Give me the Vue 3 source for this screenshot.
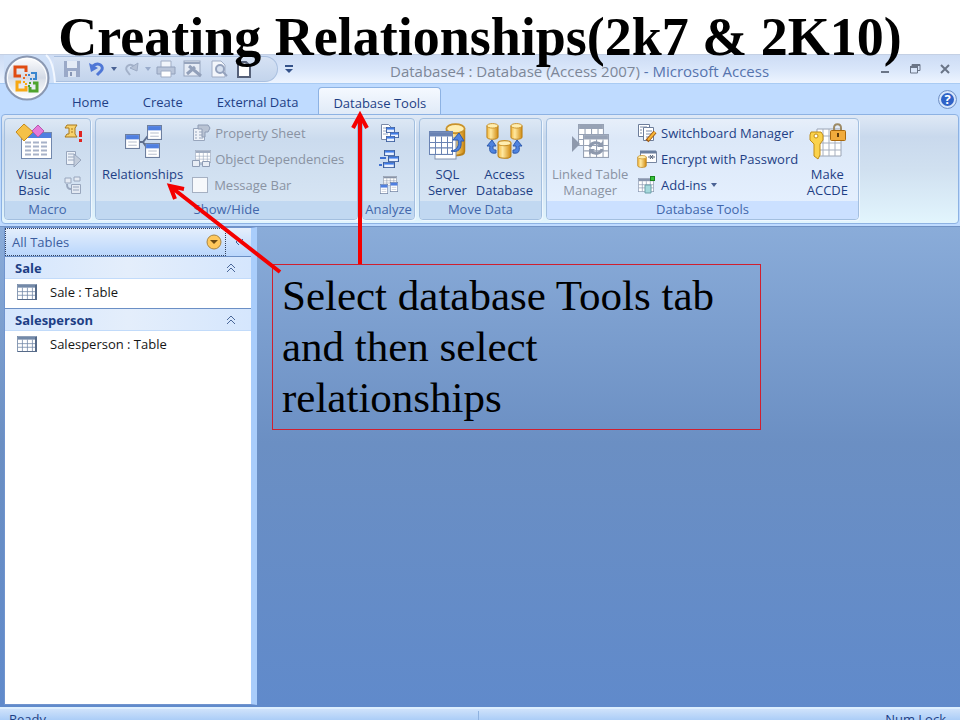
<template>
  <div class="slide">
    <h1 class="slide-title">Creating Relationships(2k7 &amp; 2K10)</h1>

    <!-- shared icon parts -->
    <svg class="defs" aria-hidden="true">
      <defs>
        <linearGradient id="gold" x1="0" x2="1" y1="0" y2="0">
          <stop offset="0" stop-color="#f3b73c" />
          <stop offset="0.35" stop-color="#ffe9a0" />
          <stop offset="1" stop-color="#d18a10" />
        </linearGradient>
        <linearGradient id="orb" x1="0" x2="0" y1="0" y2="1">
          <stop offset="0" stop-color="#ffffff" />
          <stop offset="0.5" stop-color="#d3dae6" />
          <stop offset="0.55" stop-color="#dde2ea" />
          <stop offset="1" stop-color="#ffffff" />
        </linearGradient>
        <symbol id="win" viewBox="0 0 14 14" preserveAspectRatio="none">
          <rect x="0.5" y="0.5" width="13" height="13" fill="#fff" stroke="#6d7f9f" />
          <rect x="1" y="1" width="12" height="4" fill="#4f7fe0" />
          <path d="M3 7.5h8M3 10.5h8" stroke="#b8bfce" />
        </symbol>
        <symbol id="pane" viewBox="0 0 10 7" preserveAspectRatio="none">
          <rect x="0.5" y="0.5" width="9" height="6" fill="#e9f1ff" stroke="#3c5f9f" />
          <rect x="1" y="1" width="8" height="2" fill="#3d7be8" />
        </symbol>
        <symbol id="drum" viewBox="0 0 14 18" preserveAspectRatio="none">
          <path d="M1 3v12c0 3 12 3 12 0V3z" fill="url(#gold)" stroke="#b98018" />
          <ellipse cx="7" cy="3" rx="6" ry="2.4" fill="#ffeeb0" stroke="#c9922a" />
        </symbol>
        <symbol id="sheet" viewBox="0 0 24 22" preserveAspectRatio="none">
          <rect x="0.5" y="0.5" width="23" height="21" fill="#fff" stroke="currentColor" />
          <rect x="1" y="1" width="22" height="4" fill="currentColor" />
          <path d="M1 10.5h22M1 15.5h22M6.5 5v16M12.5 5v16M18.5 5v16" stroke="currentColor" />
        </symbol>
      </defs>
    </svg>

    <div class="window">
      <header class="title-bar">
        <div class="quick-access">
          <button class="qa" aria-label="Save">
            <svg width="18" height="18"><path d="M1 1h16v16H1z" fill="#9aa9c8" /><path d="M4 1h10v7H4z" fill="#e4ebf6" /><path d="M5 11h8v6H5z" fill="#dce4f1" /><path d="M7 12h2v4H7z" fill="#8796b5" /></svg>
          </button>
          <button class="qa" aria-label="Undo">
            <svg width="18" height="18"><path d="M5 6c6-5 12 1 8 5l-4 4" fill="none" stroke="#4f77d6" stroke-width="3" /><path d="M1 3l2 9 7-4z" fill="#4f77d6" /></svg>
          </button>
          <span class="drop"></span>
          <button class="qa redo" aria-label="Redo">
            <svg width="18" height="18"><path d="M13 7c-5-5-11 0-8 4l3 4" fill="none" stroke="#a3b1c9" stroke-width="2" /><path d="M16 3l-1 8-7-3z" fill="#b5c1d6" stroke="#9cabc5" /></svg>
          </button>
          <span class="drop faded"></span>
          <button class="qa" aria-label="Print">
            <svg width="20" height="18"><path d="M5 1h10v7H5z" fill="#f1f5fb" stroke="#a0adc5" /><path d="M1 7h18v7H1z" fill="#b9c5da" stroke="#92a1bc" /><path d="M5 11h10v6H5z" fill="#fff" stroke="#a0adc5" /></svg>
          </button>
          <button class="qa" aria-label="Design view">
            <svg width="20" height="18"><rect x="1" y="1" width="16" height="15" fill="#e6ecf6" stroke="#97a5be" /><path d="M1 3h16" stroke="#97a5be" stroke-width="2" /><path d="M6 6l12 10M4 14l8-7" stroke="#92a0ba" stroke-width="3" /></svg>
          </button>
          <button class="qa" aria-label="Print preview">
            <svg width="18" height="18"><path d="M2 1h9l4 4v12H2z" fill="#f3f6fb" stroke="#a0adc5" /><circle cx="10" cy="9" r="4" fill="#d7e1f0" stroke="#94a2bd" stroke-width="2" /><path d="M13 12l4 4" stroke="#94a2bd" stroke-width="2" /></svg>
          </button>
          <button class="qa" aria-label="New">
            <svg width="18" height="18"><path d="M3 2h8l4 4v11H3z" fill="#fff" stroke="#566179" stroke-width="2" /><path d="M11 2v4h4" fill="none" stroke="#566179" /></svg>
          </button>
        </div>
        <button class="customize" aria-label="Customize Quick Access Toolbar">
          <svg width="8" height="9"><path d="M0 1h8" stroke="#34528a" stroke-width="2" /><path d="M0 4h8L4 8z" fill="#34528a" /></svg>
        </button>
        <div class="caption"><span>Database4 : Database (Access 2007)</span> - Microsoft Access</div>
        <div class="window-buttons">
          <button aria-label="Minimize"><svg width="12" height="12"><path d="M2 9h8" stroke="#6a7587" stroke-width="2" /></svg></button>
          <button aria-label="Restore"><svg width="12" height="12"><path d="M3 3V1.500h8v6H9M1.500 4h7v6h-7z" fill="none" stroke="#6a7587" /><path d="M1 4h8M3 2h8" stroke="#6a7587" stroke-width="2" /></svg></button>
          <button aria-label="Close"><svg width="12" height="12"><path d="M2 2l8 8M10 2l-8 8" stroke="#6a7587" stroke-width="2" /></svg></button>
        </div>
      </header>

      <button class="office" aria-label="Office Button">
        <svg width="54" height="48" viewBox="0 0 54 48">
          <path d="M0 1h42c5 4 8 14 9 28H0z" fill="#cfe0f8" />
          <path d="M42 1c5 4 8 14 9 28" fill="none" stroke="#f2f7ff" stroke-width="2" />
          <circle cx="23" cy="24" r="21.500" fill="url(#orb)" stroke="#8a98b2" stroke-width="2" />
          <circle cx="23" cy="24" r="19.500" fill="none" stroke="#fff" />
          <g fill="none" stroke-width="3">
            <path d="M17 22h-6V13h11v5" stroke="#e04c12" />
            <path d="M27 19h5v6h-3" stroke="#3a86cf" stroke-width="2" />
            <path d="M17 28h-4v8h9v-4" stroke="#f7a813" />
            <path d="M26 33v4h7v-8h-4" stroke="#4fa32d" />
          </g>
          <g fill="#e66a22"><path d="M19 23h2v2h-2zM21 20h2v2h-2z" /></g>
          <g fill="#3a86cf"><path d="M24 20h2v2h-2zM26 24h2v2h-2z" /></g>
          <g fill="#f7a813"><path d="M19 27h2v2h-2zM21 29h2v2h-2z" /></g>
          <g fill="#4fa32d"><path d="M25 28h2v2h-2zM24 31h2v2h-2z" /></g>
        </svg>
      </button>

      <nav class="tabs">
        <button v-for="tab in tabs" :key="tab" class="tab" :class="{ active: tab === activeTab }" @click="activeTab = tab">{{ tab }}</button>
        <button class="help" aria-label="Help">?</button>
      </nav>

      <section class="ribbon">
        <div class="group">
          <div class="group-body macro">
            <button class="big">
              <svg width="38" height="38">
                <rect x="6.500" y="9.500" width="30" height="26" fill="#fff" stroke="#7288ad" />
                <path d="M7 10h29v5H7z" fill="#4f7fe0" />
                <path d="M10 19.500h24M10 23.500h24M10 27.500h24M10 31.500h24" stroke="#a7b2c8" stroke-width="2" stroke-dasharray="6 2" />
                <path d="M9 1l9 8-9 9-8-9z" fill="#f5c148" stroke="#c58a1c" />
                <path d="M23 2l6 6-6 6-6-6z" fill="#e47bd9" stroke="#b857ae" />
              </svg>
              <span>Visual<br>Basic</span>
            </button>
            <div class="icon-stack">
              <button aria-label="Run Macro">
                <svg width="20" height="20"><path d="M4 2h10l-2 3v6l2 3H2l2-3h2V5H2z" fill="#f7d26c" stroke="#a9781c" /><path d="M8 6h2M8 9h2" stroke="#a9781c" /><path d="M17.500 8v6M17.500 16v3" stroke="#e02420" stroke-width="3" /></svg>
              </button>
              <button disabled aria-label="Convert Macros">
                <svg width="20" height="20"><path d="M3.500 2.500h9v13h-9z" fill="#edf2f9" stroke="#98a6bd" /><path d="M5 5h6M5 8h6M5 11h6" stroke="#98a6bd" /><path d="M11 5l7 6-7 7z" fill="#c2ccdb" stroke="#98a6bd" /></svg>
              </button>
              <button disabled aria-label="Create Shortcut Menu">
                <svg width="20" height="20"><path d="M2 3h6v5H2zM11 2h6v4h-6zM8.500 9.500h9v9h-9z" fill="#e3e9f2" stroke="#98a6bd" /><path d="M4 9c0 4 1 5 4 5" fill="none" stroke="#98a6bd" stroke-width="2" /><path d="M10 12h6M10 15h6" stroke="#98a6bd" /></svg>
              </button>
            </div>
          </div>
          <div class="group-label">Macro</div>
        </div>

        <div class="group">
          <div class="group-body show">
            <button class="big">
              <svg width="38" height="38">
                <path d="M14 19h5l8-10M19 19l6 9" fill="none" stroke="#5f6f8d" stroke-width="2" />
                <use href="#win" x="1" y="11" width="15" height="15" />
                <use href="#win" x="23" y="2" width="15" height="15" />
                <use href="#win" x="21" y="20" width="15" height="15" />
              </svg>
              <span>Relationships</span>
            </button>
            <div class="row-stack">
              <button class="row" disabled>
                <svg width="20" height="20"><path d="M2.500 5.500h11v12h-11z" fill="#eef2f8" stroke="#98a6bd" /><path d="M4 9h2M8 9h4M4 12h2M8 12h4M4 15h2M8 15h4" stroke="#98a6bd" /><path d="M7 2h10l2 3-2 4h-3v5h-3V6H7z" fill="#b9c3d3" stroke="#8e9cb4" /></svg>
                Property Sheet
              </button>
              <button class="row" disabled>
                <svg width="20" height="20" color="#9eabc0"><use href="#sheet" x="4" y="1" width="16" height="13" /><path d="M1.500 11.500h7v6h-7zM11.500 12.500h7v5h-7z" fill="#e8edf5" stroke="#8e9cb4" /><path d="M8 15h4" stroke="#8e9cb4" /></svg>
                Object Dependencies
              </button>
              <label class="row check"><input type="checkbox" disabled>Message Bar</label>
            </div>
          </div>
          <div class="group-label">Show/Hide</div>
        </div>

        <div class="group">
          <div class="group-body analyze">
            <div class="icon-stack">
              <button aria-label="Database Documenter">
                <svg width="20" height="20"><path d="M2.500 1.500h7l3 3v12h-10z" fill="#fff" stroke="#7a8aa8" /><path d="M4 5h5M4 8h5M4 11h5" stroke="#9aa8c0" /><use href="#pane" x="7" y="4" width="9" height="6" /><use href="#pane" x="11" y="9" width="9" height="6" /><use href="#pane" x="7" y="13" width="9" height="6" /></svg>
              </button>
              <button aria-label="Analyze Performance">
                <svg width="20" height="20"><use href="#pane" x="5" y="1" width="11" height="6" /><use href="#pane" x="9" y="7" width="11" height="6" /><use href="#pane" x="4" y="13" width="12" height="6" /><path d="M1 9h6M0 16h3" stroke="#3f70d0" stroke-width="2" /></svg>
              </button>
              <button aria-label="Analyze Table">
                <svg width="20" height="20" color="#8894a8"><use href="#sheet" x="4" y="1" width="14" height="10" /><use href="#win" x="1" y="9" width="8" height="10" /><use href="#win" x="11" y="7" width="8" height="10" /></svg>
              </button>
            </div>
          </div>
          <div class="group-label">Analyze</div>
        </div>

        <div class="group">
          <div class="group-body move">
            <button class="big">
              <svg width="38" height="38" color="#6a83b3">
                <use href="#drum" x="17" y="0" width="21" height="34" />
                <rect x="7" y="15" width="21" height="21" fill="#fff" stroke="#8191ae" />
                <use href="#sheet" x="1" y="8" width="24" height="24" />
                <path d="M23 28c7-1 8-6 7-11h-5l6-7 5 8h-3c1 8-3 12-10 10z" fill="#4e83df" stroke="#2c59ac" />
              </svg>
              <span>SQL<br>Server</span>
            </button>
            <button class="big">
              <svg width="38" height="38">
                <use href="#drum" x="1" y="0" width="13" height="17" />
                <use href="#drum" x="25" y="0" width="13" height="17" />
                <use href="#drum" x="12" y="17" width="15" height="19" />
                <path d="M11 30C5 31 4 28 5 23H2l5-6 4 6H8c0 3 0 4 3 4zM28 30c6 1 7-2 6-7h3l-5-6-4 6h3c0 3 0 4-3 4z" fill="#4e83df" stroke="#2c59ac" />
              </svg>
              <span>Access<br>Database</span>
            </button>
          </div>
          <div class="group-label">Move Data</div>
        </div>

        <div class="group hot">
          <div class="group-body dbtools">
            <button class="big" disabled>
              <svg width="38" height="38" color="#97a2b5">
                <use href="#sheet" x="7" y="1" width="26" height="22" />
                <use href="#sheet" x="12" y="11" width="26" height="24" />
                <path d="M1 13l8 8-8 8z" fill="#8e99ad" />
                <path d="M19 24a6 5 0 0 1 11-2M31 26a6 5 0 0 1-11 2" fill="none" stroke="#8e99ad" stroke-width="3" /><path d="M32 18v6h-6zM18 32v-6h6z" fill="#8e99ad" />
              </svg>
              <span>Linked Table<br>Manager</span>
            </button>
            <div class="row-stack">
              <button class="row">
                <svg width="20" height="20"><path d="M1.500 1.500h11v12h-11z" fill="#fff" stroke="#6d7d9a" /><path d="M6.500 4.500h10v13h-10z" fill="#fff" stroke="#6d7d9a" /><path d="M3 4h7M3 7h2M3 10h2M9 8h6M9 11h6M9 14h3" stroke="#7e8ca7" /><path d="M18 9l-8 9" stroke="#9b5817" stroke-width="4" /><path d="M18 9l-7 8" stroke="#f7b536" stroke-width="2" /></svg>
                Switchboard Manager
              </button>
              <button class="row">
                <svg width="20" height="20"><path d="M3.500 2.500h16v11h-16z" fill="#fff" stroke="#7786a1" /><path d="M3 3h16" stroke="#6a7f9f" stroke-width="3" /><path d="M11 8h7M13 6l3 4M16 6l-3 4" stroke="#53617a" /><use href="#drum" x="0" y="6" width="10" height="13" /></svg>
                Encrypt with Password
              </button>
              <button class="row">
                <svg width="20" height="20" color="#8795ad"><use href="#sheet" x="1" y="3" width="16" height="14" /><path d="M8 10h6v8H8z" fill="#a5d9dc" stroke="#6c9fa8" /><rect x="13.500" y="1.500" width="4" height="4" fill="#35c23a" stroke="#19841d" /></svg>
                Add-ins <span class="drop"></span>
              </button>
            </div>
            <button class="big">
              <svg width="38" height="38">
                <path d="M9 6h24v27H9z" fill="#fff" stroke="#9aa4b5" /><path d="M9 13h24M9 20h24M9 27h24M15 6v27M21 6v27M27 6v27" stroke="#a6afbf" />
                <path d="M26 9V5c0-5 7-5 7 0v4" fill="none" stroke="#9d8b66" stroke-width="2" />
                <rect x="22.500" y="7.500" width="15" height="10" rx="1" fill="#f1ab3c" stroke="#a9690f" /><path d="M30 10v4" stroke="#5d3b0c" stroke-width="2" />
                <path d="M3 9h10l2 3v5l-3 4v11l-2 4-4-3V21l-4-4v-5z" fill="#fbd24b" stroke="#bf8b17" /><circle cx="8" cy="13" r="2" fill="#fff" stroke="#bf8b17" />
              </svg>
              <span>Make<br>ACCDE</span>
            </button>
          </div>
          <div class="group-label">Database Tools</div>
        </div>
      </section>

      <main class="workspace">
        <aside class="nav-pane">
          <div class="nav-head">
            <button class="nav-title">
              All Tables
              <svg width="16" height="16"><circle cx="8" cy="8" r="7" fill="#ffc85c" stroke="#a98543" /><path d="M4 6h8l-4 4z" fill="#6d4b14" /></svg>
            </button>
            <button class="shutter" aria-label="Collapse pane"><svg width="10" height="8"><path d="M5 1L2 4l3 3M9 1L6 4l3 3" fill="none" stroke="#3f5f98" /></svg></button>
          </div>
          <section v-for="group in navGroups" :key="group.name" class="nav-group">
            <button class="nav-group-head">
              {{ group.name }}
              <svg width="10" height="10"><path d="M1 5l4-4 4 4M1 9l4-4 4 4" fill="none" stroke="#4a6799" /></svg>
            </button>
            <a href="#" class="nav-item">
              <svg width="20" height="16" color="#7389a8"><use href="#sheet" width="20" height="16" /><path d="M19 1v15H1" fill="none" stroke="#566a88" stroke-width="2" /></svg>
              {{ group.item }}
            </a>
          </section>
        </aside>
      </main>

      <footer class="status-bar">
        <span class="ready">Ready</span>
        <span class="lock">Num Lock</span>
      </footer>
    </div>

    <p class="callout">Select database Tools tab and then select relationships</p>
    <svg class="arrows" aria-hidden="true">
      <path d="M280 272L171 187M175 199l-5-13 14 3M360 264V117M353 128l7-13 7 13" />
    </svg>
  </div>
</template>

<script setup>
import { ref } from 'vue';

const tabs = ['Home', 'Create', 'External Data', 'Database Tools'];
const activeTab = ref('Database Tools');

const navGroups = [
  { name: 'Sale', item: 'Sale : Table' },
  { name: 'Salesperson', item: 'Salesperson : Table' }
];
</script>

<style>
body {
  margin: 0;
  background: #fff;
}
</style>

<style scoped>
.slide {
  position: relative;
  display: flex;
  flex-direction: column;
  height: 100vh;
  overflow: hidden;
  font-family: "Open Sans", "Noto Sans", sans-serif;
  font-size: 13px;
  font-weight: 500;
  line-height: 16px;
  color: #1e3f85;
}

* {
  box-sizing: border-box;
}

button {
  font: inherit;
  color: inherit;
  background: none;
  border: 0;
  margin: 0;
  padding: 0;
}

svg {
  display: block;
  flex: none;
}

.defs {
  position: absolute;
  width: 0;
  height: 0;
}

.slide-title {
  position: relative;
  z-index: 2;
  flex: none;
  height: 54px;
  margin: 0;
  font: bold 54px/74px "Liberation Serif", serif;
  color: #000;
  text-align: center;
  white-space: nowrap;
}

.window {
  position: relative;
  flex: 1;
  min-height: 0;
  display: flex;
  flex-direction: column;
  background: #bfdbff;
}

.title-bar {
  flex: none;
  display: flex;
  align-items: center;
  height: 30px;
  padding-left: 54px;
  border-top: 1px solid #c4d0e4;
  border-bottom: 1px solid #a9cbf3;
  background: linear-gradient(#cddcf4, #d9e6fa 50%, #edf4ff);
}

.quick-access {
  display: flex;
  align-items: center;
  gap: 7px;
  width: 224px;
  height: 26px;
  padding-left: 9px;
  border: 1px solid #a9bfdf;
  border-left: 0;
  border-radius: 0 13px 13px 0;
  background: linear-gradient(#d6e2f4, #c3d4ec);
}

.quick-access .drop {
  margin: 0 -2px;
}

.drop {
  display: inline-block;
  border: 3px solid transparent;
  border-top: 4px solid #4a6294;
  border-bottom: 0;
}

.faded {
  opacity: 0.4;
}

.customize {
  margin-left: 7px;
}

.caption {
  flex: 1;
  padding: 4px 0 0 97px;
  font-size: 15px;
  color: #5674ae;
  white-space: nowrap;
}

.caption span {
  color: #7d8798;
}

.window-buttons {
  display: flex;
  gap: 18px;
  padding-right: 9px;
}

.office {
  position: absolute;
  top: 0;
  left: 4px;
}

.tabs {
  flex: none;
  display: flex;
  align-items: flex-end;
  height: 30px;
  padding: 0 4px 0 58px;
}

.tab {
  height: 27px;
  padding: 3px 14px 0;
  white-space: nowrap;
}

.tab + .tab {
  margin-left: 6px;
}

.tab.active {
  border: 1px solid #8db2e3;
  border-bottom: 0;
  border-radius: 4px 4px 0 0;
  background: linear-gradient(#f5f9ff, #e0eaf7);
}

.help {
  align-self: center;
  width: 17px;
  height: 17px;
  margin-left: auto;
  border: 2px solid #d5e4fa;
  border-radius: 50%;
  outline: 1px solid #7291c5;
  background: #2f62c7;
  color: #fff;
  font-weight: bold;
  line-height: 12px;
}

.ribbon {
  flex: none;
  display: grid;
  grid-template-columns: 87px 263px 53px 123px 313px;
  gap: 4px;
  height: 110px;
  margin: 0 1px;
  padding: 3px 2px;
  border: 1px solid #8db2e3;
  border-radius: 4px;
  background: linear-gradient(#dfe9f6, #c9d9ed 20%, #d0e0f0 50%, #e2f5fd);
}

.group {
  display: flex;
  flex-direction: column;
  min-width: 0;
  border: 1px solid #a3bfdf;
  border-radius: 4px;
  overflow: hidden;
  background: linear-gradient(#dde8f5, #cbdbee 20%, #d9e7f5);
  box-shadow: 1px 1px 0 #eff7ff;
}

.group.hot {
  background: linear-gradient(#e7effa, #dce8f8 20%, #e6f1ff);
}

.group-body {
  flex: 1;
  display: flex;
  align-items: flex-start;
  padding-top: 4px;
}

.group-label {
  height: 18px;
  line-height: 17px;
  text-align: center;
  color: #4267ab;
  background: #c1d8f1;
}

.hot .group-label {
  background: #cbe0ff;
}

.big {
  display: flex;
  flex-direction: column;
  align-items: center;
  gap: 5px;
  white-space: nowrap;
}

button:disabled,
.check {
  color: #8a93a3;
}

.icon-stack,
.row-stack {
  display: flex;
  flex-direction: column;
  gap: 6px;
}

.row {
  display: flex;
  align-items: center;
  gap: 4px;
  height: 20px;
  white-space: nowrap;
}

.check input {
  appearance: none;
  width: 16px;
  height: 16px;
  margin: 0 2px 0 1px;
  border: 1px solid #a5b0c2;
  background: #f6f8fb;
}

.macro {
  padding-left: 10px;
  gap: 10px;
}

.show {
  padding-left: 6px;
  gap: 8px;
}

.analyze {
  justify-content: center;
}

.move {
  justify-content: center;
  gap: 9px;
}

.dbtools {
  justify-content: space-between;
  padding-right: 10px;
  padding-left: 5px;
}

.workspace {
  flex: 1;
  min-height: 0;
  display: flex;
  margin-top: 2px;
  padding: 0 0 2px 4px;
  border-top: 1px solid #7092c4;
  background: linear-gradient(#8aacd9, #6b8fc3 45%, #608acb);
}

.nav-pane {
  width: 253px;
  border: 1px solid #7094ce;
  border-right: 6px solid #a9cdfb;
  background: #fff;
}

.nav-head {
  display: flex;
  height: 28px;
  background: linear-gradient(#e5effc, #b9d6fc);
}

.nav-title {
  flex: 1;
  display: flex;
  align-items: center;
  justify-content: space-between;
  padding: 0 3px 0 6px;
  border: 1px dotted #34425d;
  color: #3c5d9e;
}

.shutter {
  display: flex;
  align-items: center;
  justify-content: center;
  width: 25px;
}

.nav-group-head {
  display: flex;
  align-items: center;
  justify-content: space-between;
  width: 100%;
  height: 23px;
  padding: 0 15px 0 10px;
  border-top: 1px solid #6b8fc5;
  border-bottom: 1px solid #c2dbfa;
  background: linear-gradient(90deg, #d5e6fd, #e4eefb 50%, #d5e6fd);
  font-weight: bold;
}

.nav-item {
  display: flex;
  align-items: center;
  gap: 13px;
  height: 29px;
  padding: 0 0 4px 12px;
  color: #161616;
  text-decoration: none;
}

.status-bar {
  flex: none;
  display: flex;
  justify-content: space-between;
  height: 13px;
  padding: 2px 14px 0 9px;
  border-top: 2px solid #ddefff;
  background: linear-gradient(#cfe2fb, #abcdf7);
  overflow: hidden;
}

.lock {
  width: 467px;
  text-align: right;
  box-shadow: -1px 0 0 #8fb2df;
}

.callout {
  position: absolute;
  top: 264px;
  left: 272px;
  width: 489px;
  margin: 0;
  padding: 5px 9px 6px;
  border: 1px solid #d01f2e;
  font: 43px/51px "Liberation Serif", serif;
  color: #000;
}

.arrows {
  position: absolute;
  top: 0;
  left: 0;
  width: 100%;
  height: 100%;
  pointer-events: none;
  fill: none;
  stroke: #f40000;
  stroke-width: 4;
}
</style>
